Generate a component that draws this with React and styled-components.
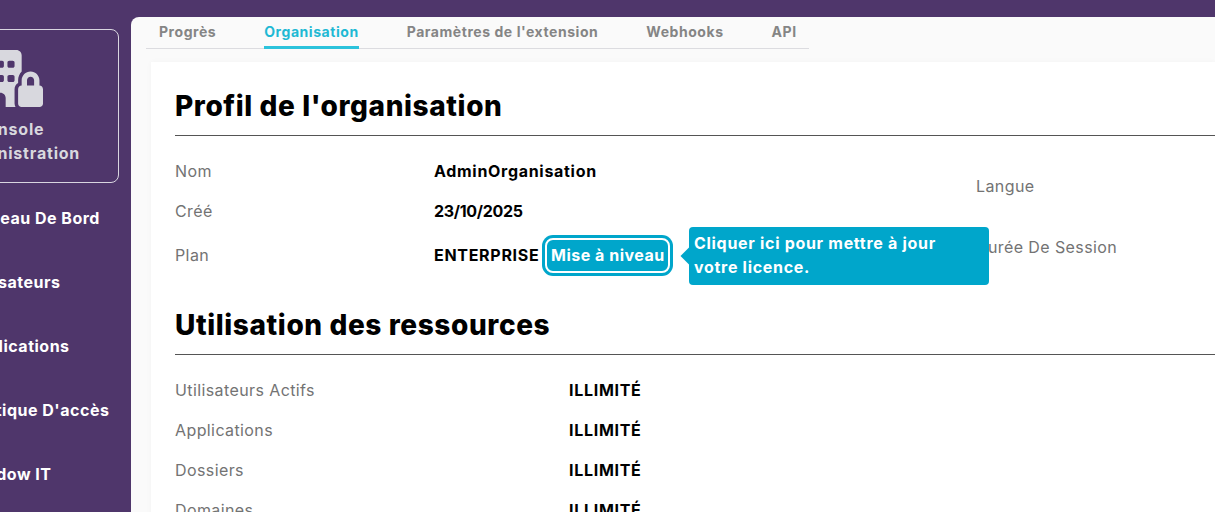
import React from 'react'
import styled, { createGlobalStyle } from 'styled-components'
import { FaBuildingLock } from 'react-icons/fa6'

const GlobalStyle = createGlobalStyle`
  html, body {
    margin: 0;
    height: 100%;
    overflow: hidden;
    background: #4f366b;
  }
  body {
    font-family: Inter, "Open Sans", "Liberation Sans", sans-serif;
  }
`

const Page = styled.div`
  display: flex;
  width: 1215px;
  height: 512px;
  overflow: hidden;
  background: #4f366b;
`

const Sidebar = styled.aside`
  flex: none;
  width: 219px;
  margin-left: -100px;
  margin-right: 12px;
  padding-top: 29px;
`

const ConsoleCard = styled.div`
  box-sizing: border-box;
  height: 154px;
  border: 1px solid #d9d6e0;
  border-radius: 8px;
  display: flex;
  flex-direction: column;
  align-items: center;
  padding-top: 20px;
  color: #d8d8de;
  font-size: 16px;
  font-weight: 700;
  line-height: 24px;
  letter-spacing: 0.8px;
  text-align: center;
  svg {
    width: 64px;
    height: 57px;
    margin: 0 0 10px 3px;
  }
`

const NavList = styled.nav`
  display: flex;
  flex-direction: column;
  gap: 40px;
  padding: 23px 0 0 65px;
`

const NavItem = styled.a`
  color: #fff;
  font-size: 16px;
  font-weight: 700;
  line-height: 24px;
  letter-spacing: 0.5px;
  white-space: nowrap;
`

const Main = styled.main`
  flex: 1;
  min-width: 0;
  margin-top: 17px;
  background: #fafafa;
  border-top-left-radius: 8px;
  padding-left: 15px;
`

const Tabs = styled.div`
  display: flex;
  width: 663px;
  height: 31px;
  border-bottom: 1px solid #dcdce0;
`

const Tab = styled.a`
  box-sizing: border-box;
  height: 32px;
  margin-left: ${p => p.$left}px;
  padding: 6px 0 0;
  color: ${p => (p.$active ? '#1fb9d4' : '#858585')};
  border-bottom: 3px solid ${p => (p.$active ? '#2cc3dc' : 'transparent')};
  font-size: 14px;
  font-weight: 700;
  line-height: 18px;
  letter-spacing: 0.55px;
  white-space: nowrap;
`

const Card = styled.section`
  position: relative;
  margin: 13px 0 0 5px;
  padding: 24px 0 0 24px;
  height: 440px;
  background: #fff;
  box-shadow: 0 0 6px rgba(0, 0, 0, 0.03);
`

const Heading = styled.h2`
  margin: 0;
  height: 49px;
  border-bottom: 1px solid #555;
  color: #000;
  font-size: 28px;
  font-weight: 800;
  line-height: 40px;
  letter-spacing: 0.6px;
`

const ProfileRows = styled.div`
  padding: 15px 0 26px;
  display: flex;
  flex-direction: column;
`

const Row = styled.div`
  display: flex;
  align-items: center;
  flex: none;
  height: ${p => p.$height || 40}px;
`

const Label = styled.span`
  flex: none;
  width: ${p => p.$width}px;
  color: #737373;
  font-size: 16px;
  line-height: 24px;
  letter-spacing: 0.4px;
`

const Value = styled.span`
  color: #000;
  font-size: 16px;
  font-weight: 700;
  line-height: 24px;
  letter-spacing: ${p => p.$spacing ?? 0.7}px;
  white-space: nowrap;
`

const UpgradeButton = styled.button`
  margin-left: 6px;
  padding: 0;
  width: 125px;
  height: 35px;
  background: #00a6cb;
  border: 2px solid #fff;
  border-radius: 8px;
  box-shadow: 0 0 0 3px #00a6cb;
  color: #fff;
  font-family: inherit;
  font-size: 16px;
  font-weight: 700;
  letter-spacing: 0.5px;
  white-space: nowrap;
`

const Tooltip = styled.div`
  position: absolute;
  z-index: 2;
  left: 538px;
  top: 165px;
  box-sizing: border-box;
  width: 300px;
  height: 58px;
  padding: 4px 5px;
  background: #00a6cb;
  border-radius: 4px;
  color: #fff;
  font-size: 16px;
  font-weight: 700;
  line-height: 24px;
  letter-spacing: 0.7px;
  &::before {
    content: '';
    position: absolute;
    left: -6px;
    top: 23px;
    width: 12px;
    height: 12px;
    background: #00a6cb;
    transform: rotate(45deg);
  }
`

const SideLabel = styled.span`
  position: absolute;
  left: 825px;
  top: ${p => p.$top}px;
  color: #737373;
  font-size: 16px;
  line-height: 24px;
  letter-spacing: 0.4px;
  white-space: nowrap;
`

const UsageRows = styled.div`
  padding-top: 15px;
`

const usage = ['Utilisateurs Actifs', 'Applications', 'Dossiers', 'Domaines']

export default function App() {
  return (
    <Page>
      <GlobalStyle />
      <Sidebar>
        <ConsoleCard>
          <FaBuildingLock />
          <span>Console</span>
          <span>d'administration</span>
        </ConsoleCard>
        <NavList>
          <NavItem>Tableau De Bord</NavItem>
          <NavItem>Utilisateurs</NavItem>
          <NavItem>Applications</NavItem>
          <NavItem>Politique D'accès</NavItem>
          <NavItem>Shadow IT</NavItem>
        </NavList>
      </Sidebar>
      <Main>
        <Tabs>
          <Tab $left={13}>Progrès</Tab>
          <Tab $left={48} $active>Organisation</Tab>
          <Tab $left={48}>Paramètres de l'extension</Tab>
          <Tab $left={48}>Webhooks</Tab>
          <Tab $left={48}>API</Tab>
        </Tabs>
        <Card>
          <Heading>Profil de l'organisation</Heading>
          <ProfileRows>
            <Row><Label $width={259}>Nom</Label><Value>AdminOrganisation</Value></Row>
            <Row><Label $width={259}>Créé</Label><Value $spacing={-0.3}>23/10/2025</Value></Row>
            <Row $height={48}>
              <Label $width={259}>Plan</Label>
              <Value>ENTERPRISE</Value>
              <UpgradeButton>Mise à niveau</UpgradeButton>
            </Row>
          </ProfileRows>
          <SideLabel $top={112}>Langue</SideLabel>
          <SideLabel $top={173}>Durée De Session</SideLabel>
          <Tooltip>Cliquer ici pour mettre à jour votre licence.</Tooltip>
          <Heading>Utilisation des ressources</Heading>
          <UsageRows>
            {usage.map(name => (
              <Row key={name}>
                <Label $width={394}>{name}</Label>
                <Value>ILLIMITÉ</Value>
              </Row>
            ))}
          </UsageRows>
        </Card>
      </Main>
    </Page>
  )
}
